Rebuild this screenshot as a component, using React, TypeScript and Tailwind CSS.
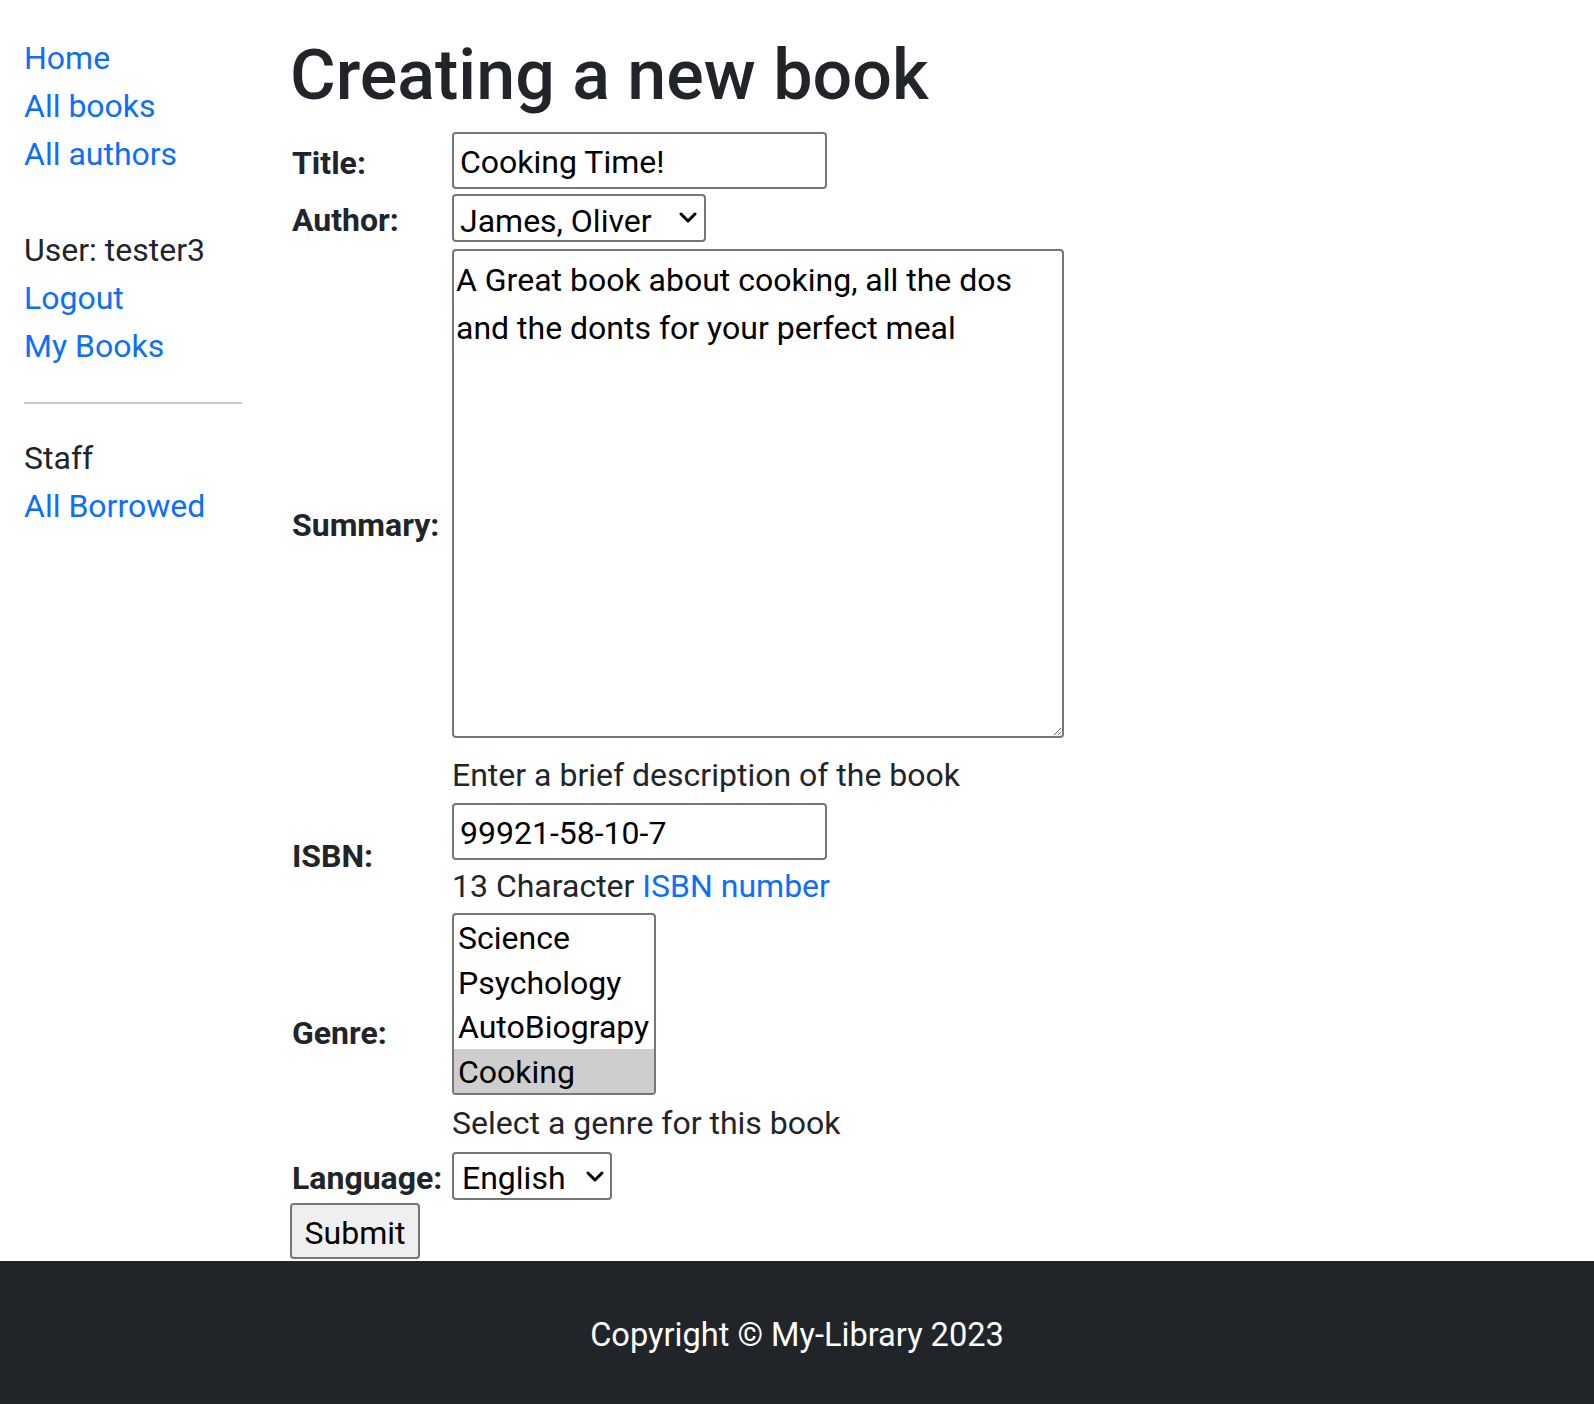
const link = "text-[#0d6efd] hover:underline";
const label = "flex items-center px-[2px] pt-[4px] font-bold";

const genres = ["Science", "Psychology", "AutoBiograpy", "Cooking"];

function Chevron({ className }: { className: string }) {
  return (
    <svg
      className={className}
      viewBox="0 0 18 11"
      fill="none"
      stroke="currentColor"
      strokeWidth="3"
      strokeLinecap="round"
      strokeLinejoin="round"
    >
      <path d="M2 2l7 7 7-7" />
    </svg>
  );
}

export default function App() {
  return (
    <div className="min-h-screen flex flex-col bg-white font-['Roboto',sans-serif] text-[32px] leading-[48px] text-[#212529]">
      <div className="flex pt-[34px]">
        {/* sidebar */}
        <aside className="w-[266px] shrink-0 px-[24px]">
          <ul>
            <li><a href="#" className={link}>Home</a></li>
            <li><a href="#" className={link}>All books</a></li>
            <li><a href="#" className={link}>All authors</a></li>
          </ul>
          <ul className="mt-[48px]">
            <li>User: tester3</li>
            <li><a href="#" className={link}>Logout</a></li>
            <li><a href="#" className={link}>My Books</a></li>
          </ul>
          <hr className="mt-[32px] mb-[30px] border-t-2 border-[#c8c9ca]" />
          <ul>
            <li>Staff</li>
            <li><a href="#" className={link}>All Borrowed</a></li>
          </ul>
        </aside>

        {/* content */}
        <main className="flex-1 pl-[24px]">
          <h1 className="text-[70px] leading-[82px] font-medium mb-[14px]">Creating a new book</h1>
          <form>
            <div className="grid grid-cols-[160px_auto] justify-start">
              <div className={label}>Title:</div>
              <div className="py-[2px] px-[2px]">
                <input
                  defaultValue="Cooking Time!"
                  className="h-[57px] w-[375px] border-2 border-[#767676] rounded-[4px] px-[6px] pt-[2px] text-black"
                />
              </div>

              <div className={label}>Author:</div>
              <div className="py-[2px] px-[2px]">
                <div className="relative w-[254px] mt-[1px]">
                  <select
                    defaultValue="oliver"
                    className="block appearance-none h-[48px] w-[254px] border-2 border-[#767676] rounded-[4px] pl-[6px] pt-[5px] leading-[40px] text-black"
                  >
                    <option value="oliver">James, Oliver</option>
                  </select>
                  <Chevron className="absolute right-[9px] top-[18px] w-[18px] h-[11px] text-black pointer-events-none" />
                </div>
              </div>

              <div className={label}>Summary:</div>
              <div className="py-[2px] px-[2px] flex flex-col items-start">
                <textarea
                  defaultValue={"A Great book about cooking, all the dos and the donts for your perfect meal"}
                  className="mt-[3px] h-[489px] w-[612px] border-2 border-[#767676] rounded-[4px] px-[2px] pt-[5px] text-black resize"
                />
                <span className="mt-[13px]">Enter a brief description of the book</span>
              </div>

              <div className="flex items-center px-[2px] pb-[2px] font-bold">ISBN:</div>
              <div className="py-[2px] px-[2px] flex flex-col items-start">
                <input
                  defaultValue="99921-58-10-7"
                  className="h-[57px] w-[375px] border-2 border-[#767676] rounded-[4px] px-[6px] pt-[2px] text-black"
                />
                <span className="mt-[2px]">
                  13 Character <a href="#" className={link}>ISBN number</a>
                </span>
              </div>

              <div className={label}>Genre:</div>
              <div className="py-[2px] px-[2px] flex flex-col items-start">
                <div role="listbox" className="-mt-px w-[204px] border-2 border-[#767676] rounded-[4px] overflow-hidden text-black">
                  {genres.map((g) => (
                    <div
                      key={g}
                      className={
                        g === "Cooking"
                          ? "h-[44.5px] leading-[44.5px] px-[4px] pt-[1px] bg-[#cecece] whitespace-nowrap"
                          : "h-[44.5px] leading-[44.5px] px-[4px] pt-[1px] whitespace-nowrap"
                      }
                    >
                      {g}
                    </div>
                  ))}
                </div>
                <span className="mt-[4px]">Select a genre for this book</span>
              </div>

              <div className={label}>Language:</div>
              <div className="py-[2px] px-[2px]">
                <div className="relative w-[160px] mt-[1px]">
                  <select
                    defaultValue="en"
                    className="block appearance-none h-[48px] w-[160px] border-2 border-[#767676] rounded-[4px] pl-[8px] pt-[3px] leading-[42px] text-black"
                  >
                    <option value="en">English</option>
                  </select>
                  <Chevron className="absolute right-[8px] top-[19px] w-[18px] h-[11px] text-black pointer-events-none" />
                </div>
              </div>
            </div>
            <button
              type="submit"
              className="mt-[1px] mb-[1px] h-[56px] w-[130px] pt-[3px] bg-[#efefef] border-2 border-[#767676] rounded-[4px] text-black"
            >
              Submit
            </button>
          </form>
        </main>
      </div>

      <footer className="mt-auto h-[143px] flex items-center justify-center pt-[5px] bg-[#212529] text-white text-[32.6px]">
        Copyright © My-Library 2023
      </footer>
    </div>
  );
}
